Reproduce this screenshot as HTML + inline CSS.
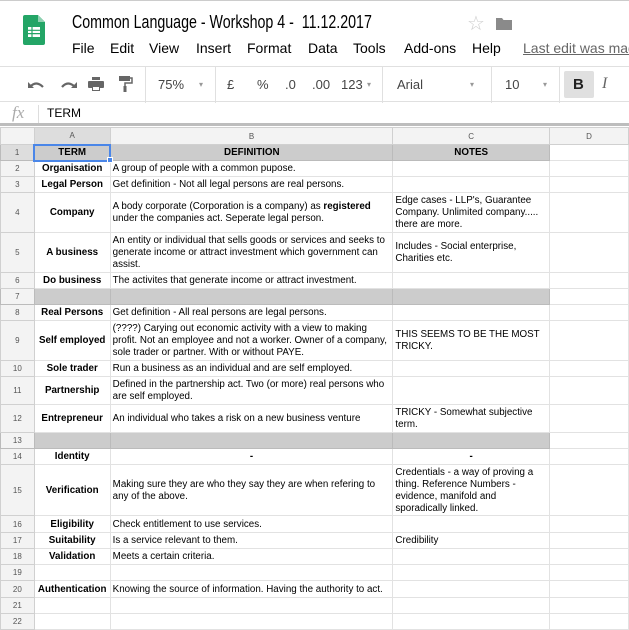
<!DOCTYPE html>
<html><head><meta charset="utf-8"><style>
*{margin:0;padding:0;box-sizing:border-box}
body{width:629px;height:630px;overflow:hidden;background:#fff;font-family:"Liberation Sans",Arial,sans-serif;position:relative;border-top:1px solid #ccc}
.abs{position:absolute}
.title{left:72px;top:11px;font-size:18px;color:#000;transform:scaleX(0.79);transform-origin:left top;white-space:nowrap}
.menu{top:39px;font-size:14px;color:#000}
.tb{top:65px;left:0;width:629px;height:36px;border-top:1px solid #e0e0e0;border-bottom:1px solid #e0e0e0}
.sep{position:absolute;top:0;width:1px;height:36px;background:#e0e0e0}
.ti{position:absolute;top:10px;font-size:13px;color:#444}
.fx{top:101px;left:0;width:629px;height:24px;border-bottom:3px solid #bdbdbd}
table{position:absolute;left:0;top:126px;border-collapse:collapse;table-layout:fixed;font-size:9.8px;color:#000}
td{border:1px solid #e2e2e2;padding:1px 2px 0;vertical-align:middle;line-height:12px;overflow:hidden;white-space:normal}
td.n{background:#f3f3f3;color:#555;text-align:center;font-size:8px;border-color:#d0d0d0}
td.a{text-align:center;font-weight:bold}
tr.g td{background:#ccc;border-color:#bbb}
tr.g td.n{background:#f3f3f3}
tr.h td{background:#f3f3f3;color:#555;text-align:center;font-size:8px;border-color:#d0d0d0}
</style></head><body>
<svg class="abs" style="left:23px;top:14px" width="22" height="30" viewBox="0 0 22 30"><path d="M2 0h13l7 7v21a2 2 0 0 1-2 2H2a2 2 0 0 1-2-2V2a2 2 0 0 1 2-2z" fill="#23a566"/><path d="M15 0v7h7z" fill="#8ed1b1"/><rect x="5" y="12" width="12" height="10" fill="#fff"/><path d="M5 15.3h12M5 18.6h12M9 12v10" stroke="#23a566" stroke-width="1.2"/></svg>
<div class="abs title">Common Language - Workshop 4 -&nbsp; 11.12.2017</div>
<div class="abs" style="left:467px;top:10px;font-size:20px;color:#ccc">☆</div>
<svg class="abs" style="left:496px;top:16px" width="16" height="13"><path d="M0 1h6l1.5 2H16v10H0z" fill="#8a8a8a"/></svg>
<div class="abs menu" style="left:72px">File</div>
<div class="abs menu" style="left:110px">Edit</div>
<div class="abs menu" style="left:149px">View</div>
<div class="abs menu" style="left:196px">Insert</div>
<div class="abs menu" style="left:247px">Format</div>
<div class="abs menu" style="left:308px">Data</div>
<div class="abs menu" style="left:353px">Tools</div>
<div class="abs menu" style="left:404px">Add-ons</div>
<div class="abs menu" style="left:472px">Help</div>
<div class="abs menu" style="left:523px;color:#666;text-decoration:underline;white-space:nowrap">Last edit was made</div>
<div class="abs tb">
<svg style="position:absolute;left:26px;top:10px" width="60" height="16"><path d="M4 10 q6-7 13 0" stroke="#666" stroke-width="2.2" fill="none"/><path d="M2 5v6h6z" fill="#666"/><path d="M36 10 q6-7 13 0" stroke="#666" stroke-width="2.2" fill="none"/><path d="M51 5v6h-6z" fill="#666"/></svg>
<svg style="position:absolute;left:88px;top:10px" width="16" height="15"><rect x="4" y="0" width="8" height="3" fill="#666"/><rect x="0" y="4" width="16" height="7" rx="1" fill="#666"/><rect x="4" y="9" width="8" height="5" fill="#666"/><rect x="5" y="10" width="6" height="3" fill="#fff"/></svg>
<svg style="position:absolute;left:119px;top:9px" width="14" height="17"><rect x="0" y="0" width="11" height="5" fill="#666"/><path d="M11 2h2v5H6v3" stroke="#666" stroke-width="1.5" fill="none"/><rect x="4.5" y="10" width="3" height="6" fill="#666"/></svg>
<div class="sep" style="left:145px"></div>
<div class="ti" style="left:158px">75%</div><div class="ti" style="left:199px;font-size:8px;top:13px;color:#999">▾</div>
<div class="sep" style="left:215px"></div>
<div class="ti" style="left:227px">£</div>
<div class="ti" style="left:257px">%</div>
<div class="ti" style="left:285px">.0</div>
<div class="ti" style="left:312px">.00</div>
<div class="ti" style="left:341px">123</div><div class="ti" style="left:367px;font-size:8px;top:13px;color:#999">▾</div>
<div class="sep" style="left:382px"></div>
<div class="ti" style="left:397px">Arial</div><div class="ti" style="left:470px;font-size:8px;top:13px;color:#999">▾</div>
<div class="sep" style="left:491px"></div>
<div class="ti" style="left:505px">10</div><div class="ti" style="left:543px;font-size:8px;top:13px;color:#999">▾</div>
<div class="sep" style="left:559px"></div>
<div style="position:absolute;left:564px;top:4px;width:30px;height:27px;background:#e0e0e0;border-radius:2px"></div>
<div class="ti" style="left:573px;font-weight:bold;color:#222;font-size:15px;top:9px">B</div>
<div class="ti" style="left:602px;font-style:italic;color:#666;font-size:16px;top:8px;font-family:'Liberation Serif',serif">I</div>
</div>
<div class="abs fx">
<div style="position:absolute;left:12px;top:1px;font-family:'Liberation Serif',serif;font-style:italic;font-size:17px;color:#aaa">fx</div>
<div style="position:absolute;left:38px;top:3px;width:1px;height:18px;background:#ddd"></div>
<div style="position:absolute;left:47px;top:4px;font-size:12px">TERM</div>
</div>
<table>
<colgroup><col style="width:34px"><col style="width:76px"><col style="width:286px"><col style="width:158px"><col style="width:80px"></colgroup>
<tr class="h" style="height:17px"><td>&nbsp;</td><td style="background:#ddd">A</td><td>B</td><td>C</td><td>D</td></tr>
<tr class="g" style="height:16px"><td class="n" style="background:#ddd">1</td><td class="a" style="border:2px solid #4a86e8">TERM</td><td class="a">DEFINITION</td><td class="a">NOTES</td><td style="background:#fff;border-color:#e2e2e2"></td></tr>
<tr style="height:16px"><td class="n">2</td><td class="a">Organisation</td><td>A group of people with a common pupose.</td><td></td><td></td></tr>
<tr style="height:16px"><td class="n">3</td><td class="a">Legal Person</td><td>Get definition - Not all legal persons are real persons.</td><td></td><td></td></tr>
<tr style="height:40px"><td class="n">4</td><td class="a">Company</td><td>A body corporate (Corporation is a company) as <b>registered</b> under the companies act. Seperate legal person.</td><td>Edge cases - LLP's, Guarantee Company. Unlimited company..... there are more.</td><td></td></tr>
<tr style="height:40px"><td class="n">5</td><td class="a">A business</td><td>An entity or individual that sells goods or services and seeks to generate income or attract investment which government can assist.</td><td>Includes - Social enterprise, Charities etc.</td><td></td></tr>
<tr style="height:16px"><td class="n">6</td><td class="a">Do business</td><td>The activites that generate income or attract investment.</td><td></td><td></td></tr>
<tr class="g" style="height:16px"><td class="n">7</td><td></td><td></td><td></td><td style="background:#fff;border-color:#e2e2e2"></td></tr>
<tr style="height:16px"><td class="n">8</td><td class="a">Real Persons</td><td>Get definition - All real persons are legal persons.</td><td></td><td></td></tr>
<tr style="height:40px"><td class="n">9</td><td class="a">Self employed</td><td>(????) Carying out economic activity with a view to making profit. Not an employee and not a worker. Owner of a company, sole trader or partner. With or without PAYE.</td><td>THIS SEEMS TO BE THE MOST TRICKY.</td><td></td></tr>
<tr style="height:16px"><td class="n">10</td><td class="a">Sole trader</td><td>Run a business as an individual and are self employed.</td><td></td><td></td></tr>
<tr style="height:28px"><td class="n">11</td><td class="a">Partnership</td><td>Defined in the partnership act. Two (or more) real persons who are self employed.</td><td></td><td></td></tr>
<tr style="height:28px"><td class="n">12</td><td class="a">Entrepreneur</td><td>An individual who takes a risk on a new business venture</td><td>TRICKY - Somewhat subjective term.</td><td></td></tr>
<tr class="g" style="height:16px"><td class="n">13</td><td></td><td></td><td></td><td style="background:#fff;border-color:#e2e2e2"></td></tr>
<tr style="height:16px"><td class="n">14</td><td class="a">Identity</td><td class="a">-</td><td class="a">-</td><td></td></tr>
<tr style="height:51px"><td class="n">15</td><td class="a">Verification</td><td>Making sure they are who they say they are when refering to any of the above.</td><td>Credentials - a way of proving a thing. Reference Numbers - evidence, manifold and sporadically linked.</td><td></td></tr>
<tr style="height:17px"><td class="n">16</td><td class="a">Eligibility</td><td>Check entitlement to use services.</td><td></td><td></td></tr>
<tr style="height:16px"><td class="n">17</td><td class="a">Suitability</td><td>Is a service relevant to them.</td><td>Credibility</td><td></td></tr>
<tr style="height:16px"><td class="n">18</td><td class="a">Validation</td><td>Meets a certain criteria.</td><td></td><td></td></tr>
<tr style="height:16px"><td class="n">19</td><td></td><td></td><td></td><td></td></tr>
<tr style="height:17px"><td class="n">20</td><td class="a">Authentication</td><td>Knowing the source of information. Having the authority to act.</td><td></td><td></td></tr>
<tr style="height:16px"><td class="n">21</td><td></td><td></td><td></td><td></td></tr>
<tr style="height:16px"><td class="n">22</td><td></td><td></td><td></td><td></td></tr>
</table>
<div class="abs" style="left:107px;top:156px;width:6px;height:6px;background:#4a86e8;border:1px solid #fff"></div>
</body></html>
